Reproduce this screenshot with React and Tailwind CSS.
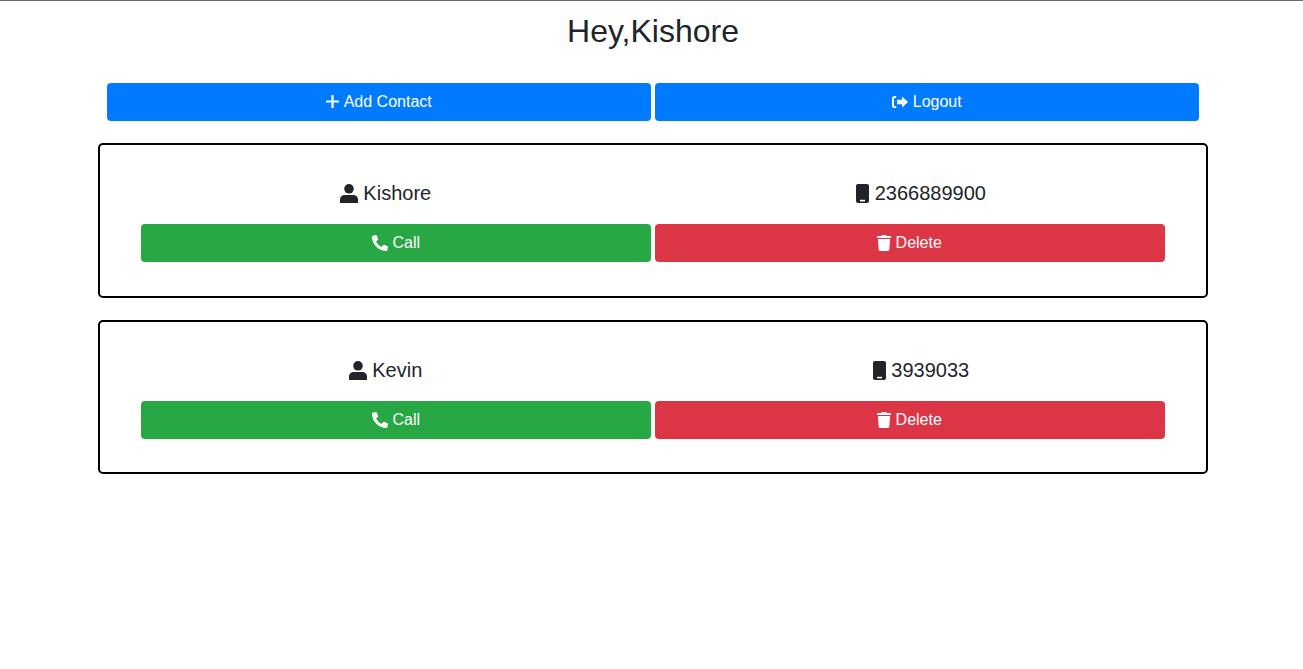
import React from "react";
import { FaPhoneAlt, FaTrash } from "react-icons/fa";

function PlusIcon() {
  return (
    <svg viewBox="0 0 13 13" className="mb-[2px] h-[13px] w-[13px]" fill="none" stroke="currentColor" strokeWidth="2.2">
      <path d="M6.5 0V13M0 6.5H13" />
    </svg>
  );
}

function LogoutIcon() {
  return (
    <svg viewBox="0 0 16 12" className="mb-[1px] h-[12px] w-4" fill="currentColor">
      <path d="M4.2 1H2.6A1.6 1.6 0 0 0 1 2.6V9.4A1.6 1.6 0 0 0 2.6 11H4.2" fill="none" stroke="currentColor" strokeWidth="2" />
      <path d="M5 3.8H10V0.6L16 6L10 11.4V8.2H5Z" />
    </svg>
  );
}

function UserIcon() {
  return (
    <svg viewBox="0 0 18 19" className="h-[19px] w-[18px]" fill="currentColor">
      <circle cx="9" cy="4.8" r="4.8" />
      <path d="M0 19V15.5C0 13 2.2 11 4.8 11H13.2C15.8 11 18 13 18 15.5V19Z" />
    </svg>
  );
}

function MobileIcon() {
  return (
    <svg viewBox="0 0 13 19" className="h-[19px] w-[13px]">
      <rect width="13" height="19" rx="2" fill="currentColor" />
      <rect x="4" y="15.8" width="5" height="1.6" fill="#ffffff" />
    </svg>
  );
}

function PhoneIcon() {
  return <FaPhoneAlt className="size-4" />;
}

function TrashIcon() {
  return <FaTrash className="h-4 w-[14px]" />;
}

function Btn({ icon: Icon, label, color, width, extra }) {
  return (
    <button className={`flex h-[38px] items-center justify-center gap-[4.45px] rounded text-base text-white ${color} ${width} ${extra}`}>
      <Icon />
      <span>{label}</span>
    </button>
  );
}

function Info({ icon: Icon, text, width }) {
  return (
    <div className={`flex h-[30px] items-center justify-center gap-[5.56px] text-xl text-[#212529] ${width}`}>
      <Icon />
      <span>{text}</span>
    </div>
  );
}

function Card({ name, phone, height }) {
  return (
    <div className={`flex flex-col rounded-[5px] border-2 border-black px-[41px] pt-[33px] ${height}`}>
      <div className="flex gap-[47px]">
        <Info icon={UserIcon} text={name} width="w-[489px]" />
        <Info icon={MobileIcon} text={phone} width="w-[488px]" />
      </div>
      <div className="mt-4 flex gap-1">
        <Btn icon={PhoneIcon} label="Call" color="bg-[#28a745]" width="w-[510px]" extra="" />
        <Btn icon={TrashIcon} label="Delete" color="bg-[#dc3545]" width="w-[510px]" extra="pr-px" />
      </div>
    </div>
  );
}

export default function App() {
  return (
    <div className="min-h-[669px] bg-white font-['Liberation_Sans',Arial,sans-serif]">
      <div className="h-px bg-[#6c6c6c]" />
      <div className="ml-[98px] w-[1110px]">
        <h2 className="mt-[11px] text-center text-[32px] leading-[38px] text-[#212529]">Hey,Kishore</h2>
        <div className="mt-[33px] flex gap-1 px-[9px]">
          <Btn icon={PlusIcon} label="Add Contact" color="bg-[#007bff]" width="w-[544px]" extra="" />
          <Btn icon={LogoutIcon} label="Logout" color="bg-[#007bff]" width="w-[544px]" extra="" />
        </div>
        <div className="mt-[22px] flex flex-col gap-[22px]">
          <Card name="Kishore" phone="2366889900" height="h-[155px]" />
          <Card name="Kevin" phone="3939033" height="h-[154px]" />
        </div>
      </div>
    </div>
  );
}
